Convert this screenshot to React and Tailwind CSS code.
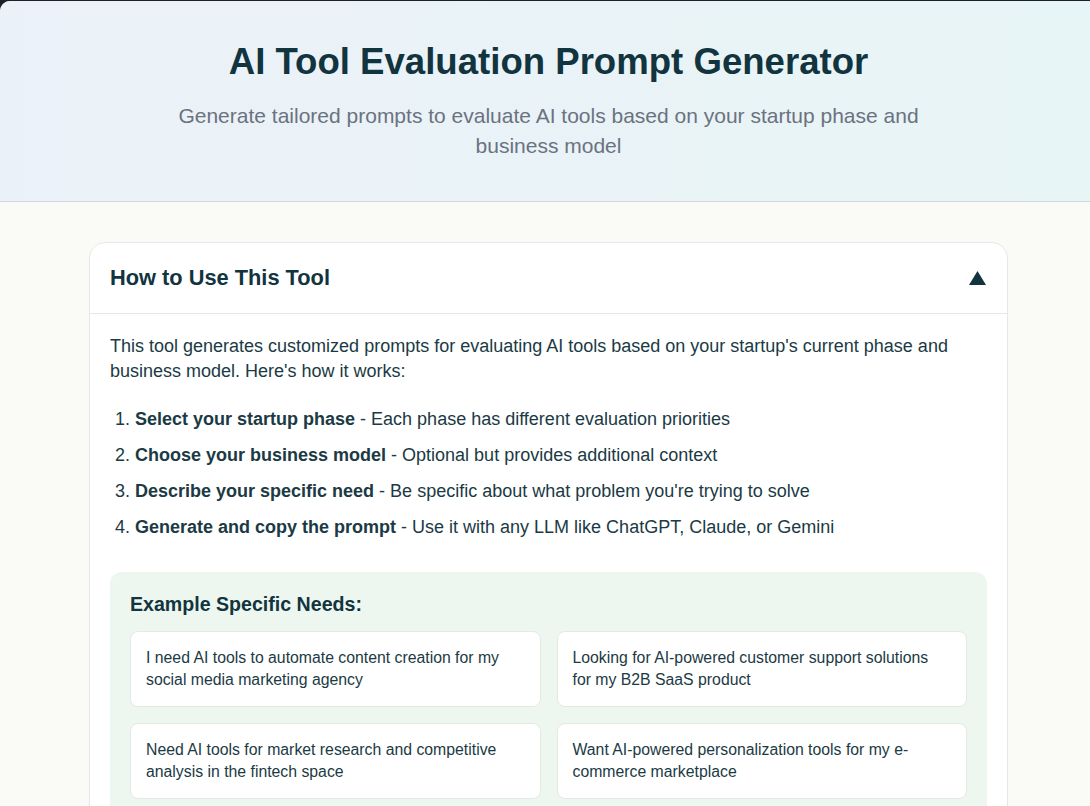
export default function App() {
  const steps = [
    ["Select your startup phase", "Each phase has different evaluation priorities"],
    ["Choose your business model", "Optional but provides additional context"],
    ["Describe your specific need", "Be specific about what problem you're trying to solve"],
    ["Generate and copy the prompt", "Use it with any LLM like ChatGPT, Claude, or Gemini"],
  ];
  const examples = [
    "I need AI tools to automate content creation for my social media marketing agency",
    "Looking for AI-powered customer support solutions for my B2B SaaS product",
    "Need AI tools for market research and competitive analysis in the fintech space",
    "Want AI-powered personalization tools for my e-commerce marketplace",
  ];
  return (
    <div className="min-h-[806px] bg-[#1d2127] pt-px" style={{ fontFamily: '"Liberation Sans", Arial, sans-serif' }}>
      <div className="min-h-[805px] overflow-hidden rounded-tl-[10px] bg-[#fafaf6]">
        <header className="h-[201px] border-b border-[#d4d8dc] bg-gradient-to-r from-[#ebf1f8] to-[#e8f5f6] pt-[39px] pl-[7px] text-center">
          <h1 className="text-[36.6px] font-bold leading-[44px] text-[#12343f]">AI Tool Evaluation Prompt Generator</h1>
          <p className="mx-auto mt-[17px] max-w-[768px] text-[21px] leading-[30px] text-[#6b7280]">
            Generate tailored prompts to evaluate AI tools based on your startup phase and business model
          </p>
        </header>
        <main className="pt-[40px]">
          <section className="ml-[89px] w-[919px] rounded-[16px] border border-[#e6e8e8] bg-white">
            <div className="flex h-[71px] items-center justify-between border-b border-[#e6e8e8] px-[20px]">
              <h2 className="text-[21.8px] font-bold text-[#12343f]">How to Use This Tool</h2>
              <svg width="17" height="14" viewBox="0 0 17 14" className="mr-px">
                <path d="M8.5 0 L17 14 L0 14 Z" fill="#12343f" />
              </svg>
            </div>
            <div className="px-[20px] pt-[20px] pb-[20px]">
              <p className="text-[18px] leading-[25px] text-[#1b3a44]">
                This tool generates customized prompts for evaluating AI tools based on your startup's current phase and business model. Here's how it works:
              </p>
              <ol className="mt-[23px] list-decimal space-y-[12px] pl-[25px] text-[18px] leading-[24px] text-[#1b3a44]">
                {steps.map(([b, t]) => (
                  <li key={b}>
                    <strong className="font-bold">{b}</strong> - {t}
                  </li>
                ))}
              </ol>
              <div className="mt-[33px] rounded-[12px] bg-[#edf7ef] px-[20px] pt-[20px] pb-[20px]">
                <h3 className="text-[19.6px] font-bold leading-[24px] text-[#12343f]">Example Specific Needs:</h3>
                <div className="mt-[15px] grid grid-cols-2 gap-[16px]">
                  {examples.map((e) => (
                    <div key={e} className="rounded-[8px] border border-[#e5e9e6] bg-white py-[15px] pl-[15px] pr-[22px] text-[15.8px] leading-[22px] text-[#1b3a44]">
                      {e}
                    </div>
                  ))}
                </div>
              </div>
            </div>
          </section>
        </main>
      </div>
    </div>
  );
}
